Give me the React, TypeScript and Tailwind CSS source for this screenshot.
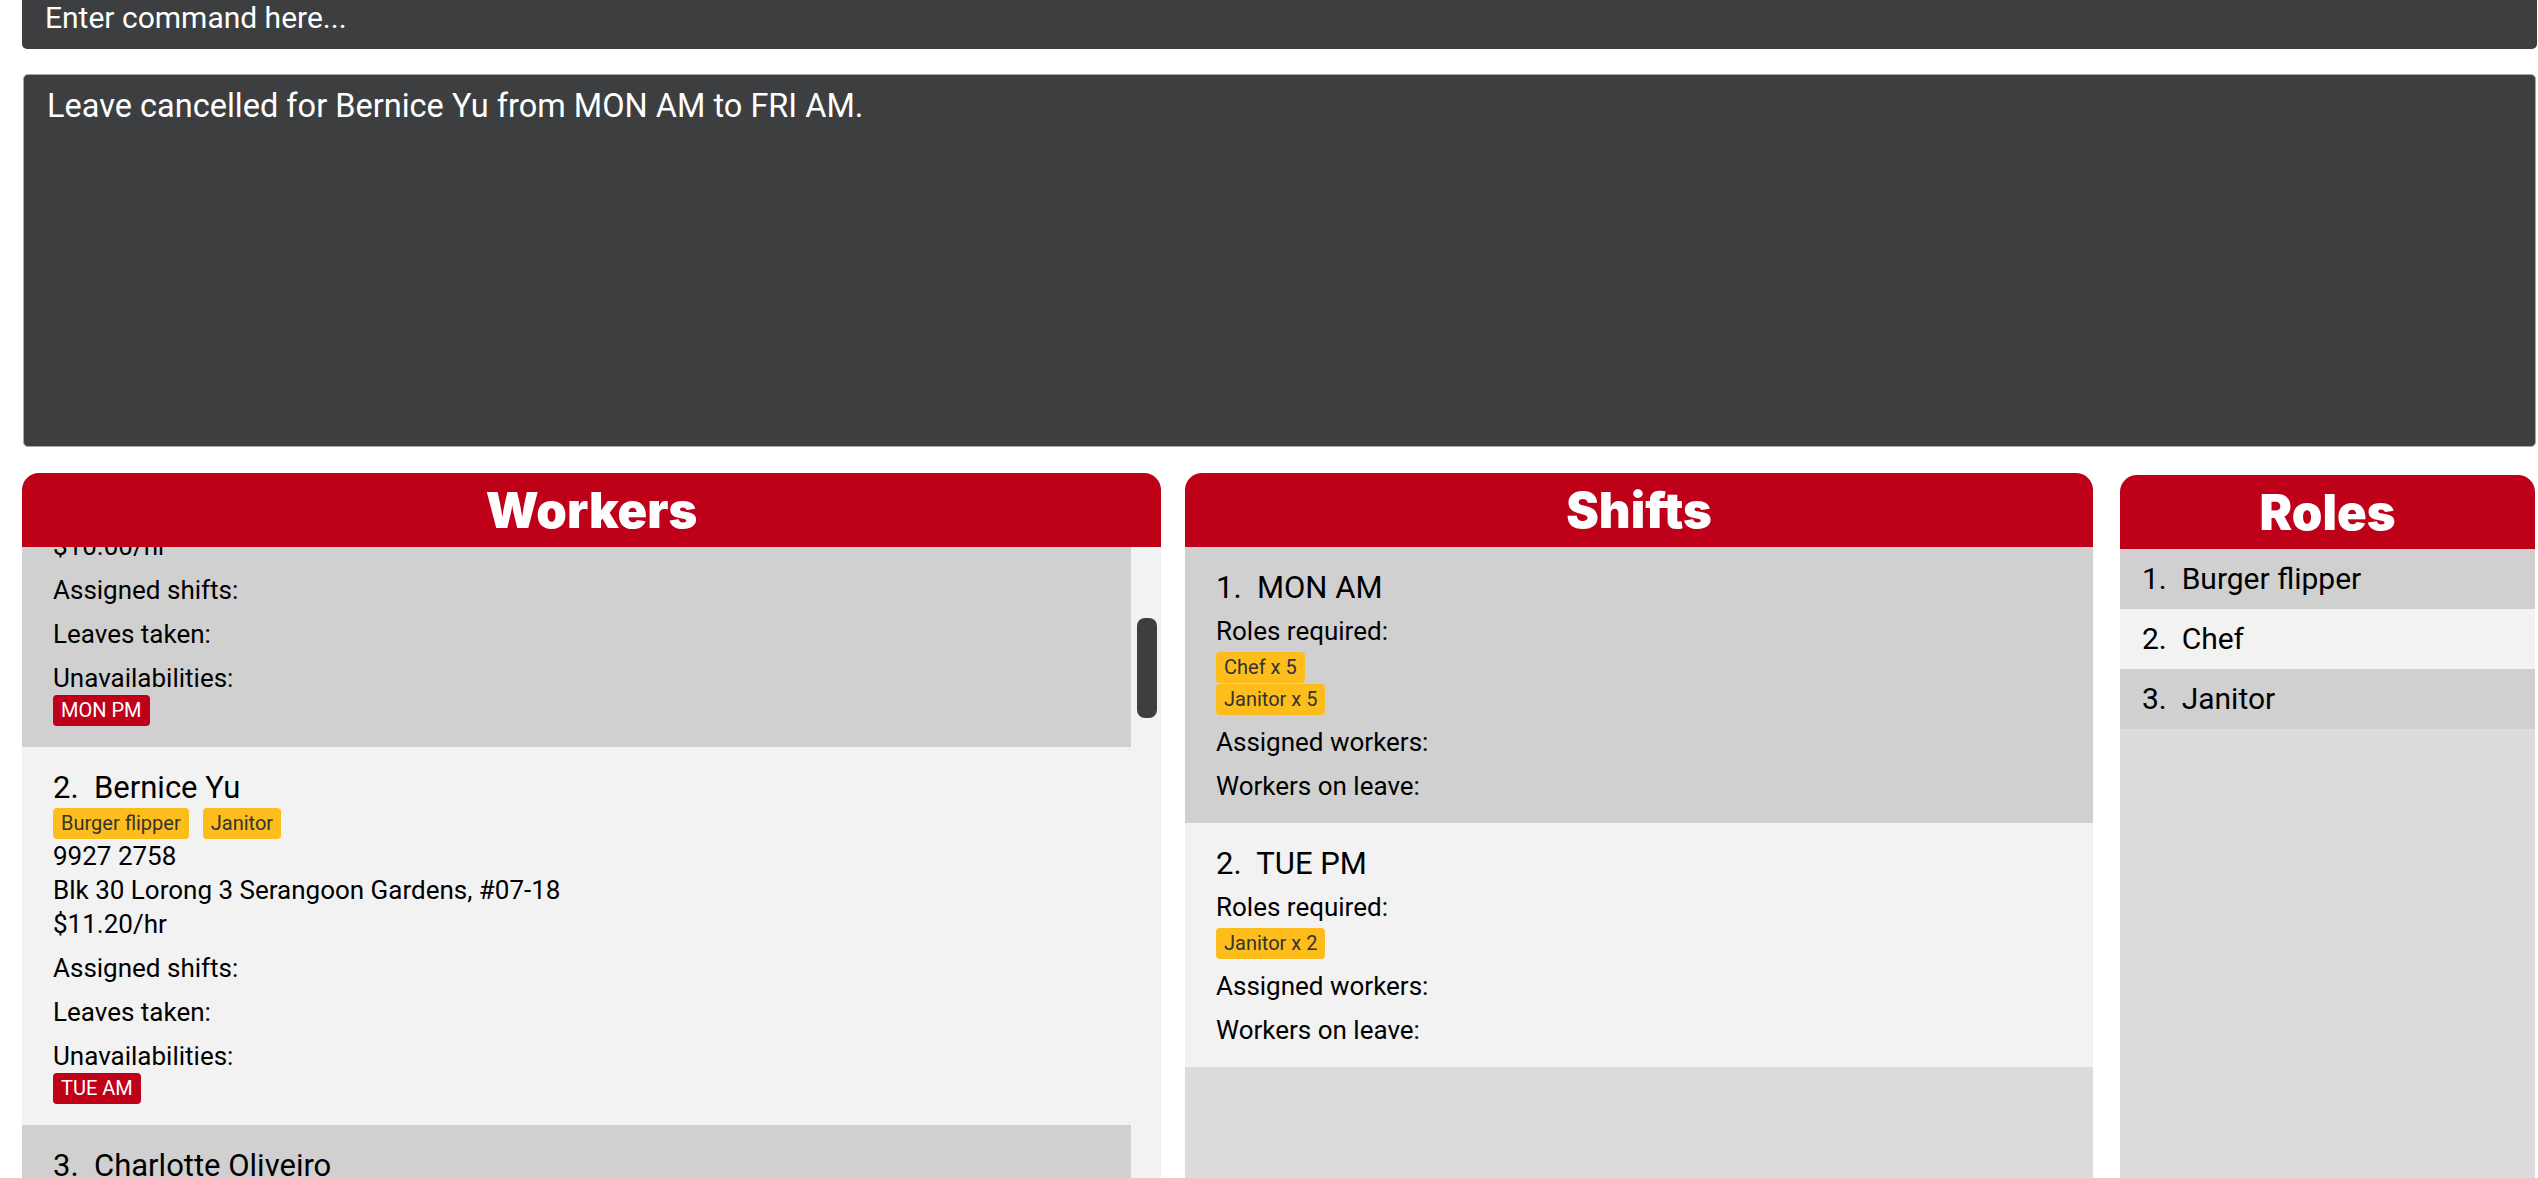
import React from "react";

const body = { fontFamily: "Roboto, 'Liberation Sans', sans-serif" };
const head = { fontFamily: "Inter, 'Liberation Sans', sans-serif" };

function Tag({ text, red }: { text: string; red?: boolean }) {
  return (
    <span
      className={
        red
          ? "inline-block h-[31px] leading-[31px] px-[8px] rounded-[4px] text-[20px] bg-[#be0019] text-white whitespace-pre"
          : "inline-block h-[31px] leading-[31px] px-[8px] rounded-[4px] text-[20px] bg-[#fdbd1c] text-[#333333] whitespace-pre"
      }
    >
      {text}
    </span>
  );
}

type Worker = {
  idx: number;
  name: string;
  roles: string[];
  phone: string;
  address: string;
  rate: string;
  unav: string[];
};

const workers: Worker[] = [
  {
    idx: 1,
    name: "Alex Yeoh",
    roles: ["Chef"],
    phone: "8743 8807",
    address: "Blk 30 Geylang Street 29, #06-40",
    rate: "$10.00/hr",
    unav: ["MON PM"],
  },
  {
    idx: 2,
    name: "Bernice Yu",
    roles: ["Burger flipper", "Janitor"],
    phone: "9927 2758",
    address: "Blk 30 Lorong 3 Serangoon Gardens, #07-18",
    rate: "$11.20/hr",
    unav: ["TUE AM"],
  },
  {
    idx: 3,
    name: "Charlotte Oliveiro",
    roles: ["Chef"],
    phone: "9321 0283",
    address: "Blk 11 Ang Mo Kio Street 74, #11-04",
    rate: "$9.50/hr",
    unav: ["WED PM"],
  },
];

function WorkerCard({ w }: { w: Worker }) {
  const bg = w.idx % 2 === 1 ? "bg-[#d0d0d0]" : "bg-[#f2f2f2]";
  return (
    <div className={`${bg} pt-[21px] pb-[21px] pl-[31px] text-black`}>
      <div className="text-[31px] leading-[40px] whitespace-pre">{`${w.idx}.  ${w.name}`}</div>
      <div className="flex gap-[14px] h-[31px]">
        {w.roles.map((r) => (
          <Tag key={r} text={r} />
        ))}
      </div>
      <div className="text-[26px] leading-[34px]">{w.phone}</div>
      <div className="text-[26px] leading-[34px]">{w.address}</div>
      <div className="text-[26px] leading-[34px]">{w.rate}</div>
      <div className="text-[26px] leading-[34px] mt-[10px]">Assigned shifts:</div>
      <div className="text-[26px] leading-[34px] mt-[10px]">Leaves taken:</div>
      <div className="text-[26px] leading-[34px] mt-[10px]">Unavailabilities:</div>
      <div className="flex gap-[14px] h-[31px]">
        {w.unav.map((u) => (
          <Tag key={u} text={u} red />
        ))}
      </div>
    </div>
  );
}

type Shift = { idx: number; name: string; roles: string[] };
const shifts: Shift[] = [
  { idx: 1, name: "MON AM", roles: ["Chef x 5", "Janitor x 5"] },
  { idx: 2, name: "TUE PM", roles: ["Janitor x 2"] },
];

function ShiftCard({ s }: { s: Shift }) {
  const bg = s.idx % 2 === 1 ? "bg-[#d0d0d0]" : "bg-[#f2f2f2]";
  return (
    <div className={`${bg} pt-[21px] pb-[20px] pl-[31px] text-black`}>
      <div className="text-[31px] leading-[40px] whitespace-pre">{`${s.idx}.  ${s.name}`}</div>
      <div className="text-[26px] leading-[34px] mt-[6px]">Roles required:</div>
      <div className="flex flex-col items-start gap-[1px] mt-[4px]">
        {s.roles.map((r) => (
          <Tag key={r} text={r} />
        ))}
      </div>
      <div className="text-[26px] leading-[34px] mt-[10px]">Assigned workers:</div>
      <div className="text-[26px] leading-[34px] mt-[10px]">Workers on leave:</div>
    </div>
  );
}

function Header({ title }: { title: string }) {
  return (
    <div
      className="h-[74px] shrink-0 bg-[#be0019] rounded-t-[17px] flex items-center justify-center text-white text-[49px] font-black leading-none"
      style={head}
    >
      {title}
    </div>
  );
}

export default function App() {
  const roles = ["Burger flipper", "Chef", "Janitor"];
  return (
    <div className="w-[2538px] h-[1178px] overflow-hidden bg-white" style={body}>
      <div className="pl-[22px] pr-[1px]">
        <div className="h-[49px] bg-[#3d3e40] rounded-b-[5px] pl-[23px] text-white text-[30px] leading-[36px]">
          Enter command here...
        </div>
        <div className="mt-[25px] mx-[1px] h-[373px] bg-[#3d3e40] rounded-[5px] border border-[#a8a8a8] pl-[23px] pt-[13px] text-white text-[32.5px] leading-[36px]">
          Leave cancelled for Bernice Yu from MON AM to FRI AM.
        </div>
      </div>
      <div className="flex items-start mt-[26px] pl-[22px]">
        <div className="w-[1139px] h-[705px] flex flex-col">
          <Header title="Workers" />
          <div className="relative flex-1 overflow-hidden bg-[#f2f2f2]">
            <div className="mt-[-178px] mr-[30px]">
              {workers.map((w) => (
                <WorkerCard key={w.idx} w={w} />
              ))}
            </div>
            <div className="absolute right-[4px] top-[71px] w-[20px] h-[100px] rounded-[8px] bg-[#3d3e40]" />
          </div>
        </div>
        <div className="ml-[24px] w-[908px] h-[705px] flex flex-col">
          <Header title="Shifts" />
          <div className="flex-1 overflow-hidden bg-[#dcdcdc]">
            {shifts.map((s) => (
              <ShiftCard key={s.idx} s={s} />
            ))}
          </div>
        </div>
        <div className="ml-[27px] mt-[2px] w-[415px] h-[705px] flex flex-col">
          <Header title="Roles" />
          <div className="flex-1 overflow-hidden bg-[#dcdcdc]">
            {roles.map((r, i) => (
              <div
                key={r}
                className={`h-[60px] flex items-center pl-[22px] text-[30px] leading-[40px] text-black whitespace-pre ${
                  i % 2 === 0 ? "bg-[#d0d0d0]" : "bg-[#f2f2f2]"
                }`}
              >
                {`${i + 1}.  ${r}`}
              </div>
            ))}
          </div>
        </div>
      </div>
    </div>
  );
}
